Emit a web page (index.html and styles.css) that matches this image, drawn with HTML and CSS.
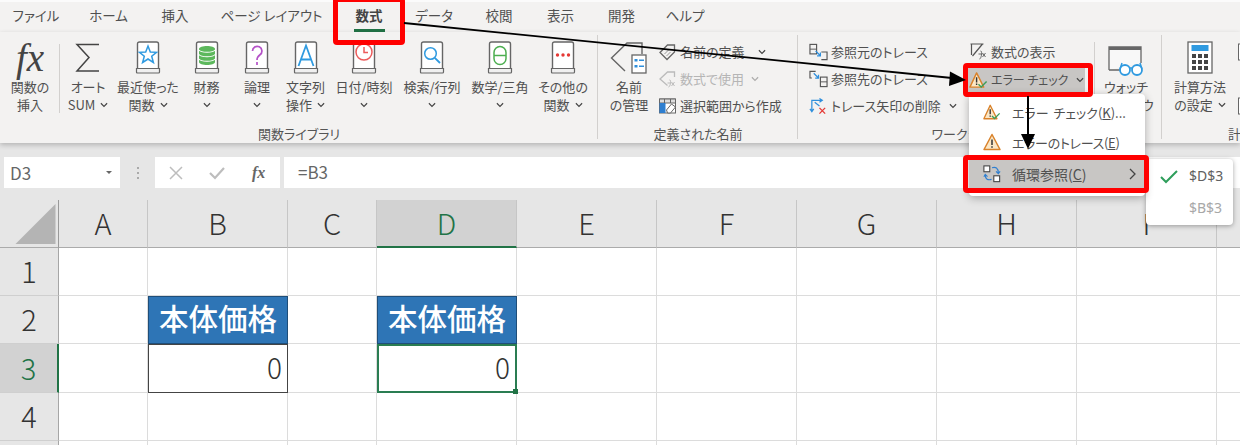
FILE: index.html
```html
<!DOCTYPE html>
<html lang="ja">
<head>
<meta charset="utf-8">
<title>数式 エラーチェック</title>
<link rel="stylesheet" href="styles.css">
</head>
<body>
<svg class="defs" width="0" height="0" aria-hidden="true">
  <symbol id="book" viewBox="0 0 26 33"><path d="M2.500 28V3q0-2 2-2h17q2 0 2 2v25" fill="#fff" stroke="#666" stroke-width="1.400"/><path d="M1.500 27.500h23V31q0 1-1 1H2.500q-1 0-1-1z" fill="#f0f0f0" stroke="#666" stroke-width="1.200"/></symbol>
  <symbol id="chev" viewBox="0 0 9 6"><path d="M1 1l3.500 3.500L8 1" fill="none" stroke="#444" stroke-width="1.300"/></symbol>
  <symbol id="warn" viewBox="0 0 18 18"><path d="M9 1.500L17 16.500H1z" fill="#fbe7c6" stroke="#d9822b" stroke-width="1.500" stroke-linejoin="round"/><path d="M9 6.500v5.500M9 13.300v1.500" stroke="#333" stroke-width="1.500"/></symbol>
  <symbol id="warncheck" viewBox="0 0 20 18"><path d="M8 1.500L15.500 16.500H1z" fill="#fbe7c6" stroke="#d9822b" stroke-width="1.500" stroke-linejoin="round"/><path d="M8 6v5.500M8 12.800v1.500" stroke="#333" stroke-width="1.500"/><path d="M10 13.500l2.800 2.800 5.700-5.800" fill="none" stroke="#3c9e5a" stroke-width="1.500"/></symbol>
</svg>
<div class="page">
  <nav class="tabs">
    <span class="tab">ファイル</span><span class="tab">ホーム</span><span class="tab">挿入</span><span class="tab">ページ レイアウト</span><span class="tab tab-active">数式</span><span class="tab">データ</span><span class="tab">校閲</span><span class="tab">表示</span><span class="tab">開発</span><span class="tab">ヘルプ</span>
  </nav>

  <section class="ribbon">
    <div class="group group-lib">
      <div class="group-body lib-grid">
        <div class="big big-sep"><span class="fx-big">fx</span><span class="lbl">関数の</span><span class="lbl">挿入</span></div>
        <div class="big"><svg class="bigicon" viewBox="0 0 26 33"><path d="M24 3.500H2l12 13L2 30h22" fill="none" stroke="#444" stroke-width="1.500"/></svg><span class="lbl">オート</span><span class="lbl">SUM <svg class="chev"><use href="#chev"/></svg></span></div>
        <div class="big"><svg class="bigicon" viewBox="0 0 26 33"><use href="#book"/><path d="M13 5l2.300 6 6.200.3-4.800 3.900 1.700 6.300-5.400-3.500-5.400 3.500 1.700-6.300-4.800-3.900 6.200-.3z" fill="none" stroke="#2f9ae0" stroke-width="1.500"/></svg><span class="lbl">最近使った</span><span class="lbl">関数 <svg class="chev"><use href="#chev"/></svg></span></div>
        <div class="big"><svg class="bigicon" viewBox="0 0 26 33"><use href="#book"/><path d="M5 8c0-4 16-4 16 0v13c0 4-16 4-16 0z" fill="#5cb85c"/><path d="M5 9c2 3 14 3 16 0M5 13.500c2 3 14 3 16 0M5 18c2 3 14 3 16 0" fill="none" stroke="#fff" stroke-width="1.100"/></svg><span class="lbl">財務</span><span class="lbl"><svg class="chev"><use href="#chev"/></svg></span></div>
        <div class="big"><svg class="bigicon" viewBox="0 0 26 33"><use href="#book"/><path d="M8.500 10a4.700 4.700 0 1 1 7.500 3.800c-2 1.500-3 2.500-3 5.200M13 21v3" fill="none" stroke="#b552c8" stroke-width="1.700"/></svg><span class="lbl">論理</span><span class="lbl"><svg class="chev"><use href="#chev"/></svg></span></div>
        <div class="big"><svg class="bigicon" viewBox="0 0 26 33"><use href="#book"/><path d="M5.500 25L13 4.500 20.500 25M8 18.500h10" fill="none" stroke="#2f9ae0" stroke-width="1.800"/></svg><span class="lbl">文字列</span><span class="lbl">操作 <svg class="chev"><use href="#chev"/></svg></span></div>
        <div class="big"><svg class="bigicon" viewBox="0 0 26 33"><use href="#book"/><circle cx="13" cy="11" r="8" fill="#fff" stroke="#ec5b5b" stroke-width="1.500"/><path d="M13 6v5.500h4" fill="none" stroke="#ec5b5b" stroke-width="1.500"/></svg><span class="lbl">日付/時刻</span><span class="lbl"><svg class="chev"><use href="#chev"/></svg></span></div>
        <div class="big"><svg class="bigicon" viewBox="0 0 26 33"><use href="#book"/><circle cx="11.500" cy="12.500" r="5.800" fill="none" stroke="#2f9ae0" stroke-width="1.500"/><path d="M15.800 16.800L21 22" stroke="#2f9ae0" stroke-width="1.800"/></svg><span class="lbl">検索/行列</span><span class="lbl"><svg class="chev"><use href="#chev"/></svg></span></div>
        <div class="big"><svg class="bigicon" viewBox="0 0 26 33"><use href="#book"/><rect x="7" y="5.500" width="12" height="18" rx="6" fill="none" stroke="#4cae50" stroke-width="1.500"/><path d="M7 14.500h12" stroke="#4cae50" stroke-width="1.500"/></svg><span class="lbl">数学/三角</span><span class="lbl"><svg class="chev"><use href="#chev"/></svg></span></div>
        <div class="big"><svg class="bigicon" viewBox="0 0 26 33"><use href="#book"/><circle cx="7.500" cy="14" r="1.700" fill="#e53935"/><circle cx="13" cy="14" r="1.700" fill="#e53935"/><circle cx="18.500" cy="14" r="1.700" fill="#e53935"/></svg><span class="lbl">その他の</span><span class="lbl">関数 <svg class="chev"><use href="#chev"/></svg></span></div>
      </div>
      <div class="group-label">関数ライブラリ</div>
    </div>

    <div class="group group-name">
      <div class="group-body">
        <div class="big big-name"><svg class="bigicon nameicon" viewBox="0 0 38 33"><path d="M15 30L1.500 17 17 2h15v11" fill="none" stroke="#666" stroke-width="1.400"/><rect x="22" y="14" width="14" height="18" fill="#fff" stroke="#666" stroke-width="1.300"/><path d="M24.500 18h3v2.500h-3zM24.500 24h3v2.500h-3z" fill="#2f8fdc"/><path d="M29 19.200h5M29 25.200h5" stroke="#2f8fdc" stroke-width="1.400"/></svg><span class="lbl">名前</span><span class="lbl">の管理</span></div>
        <div class="stack">
          <div class="small"><svg class="sicon" viewBox="0 0 18 18"><path d="M1.500 9.500L9 2h7v7l-7.500 7.500z" fill="none" stroke="#666" stroke-width="1.300"/><path d="M6 11l5-5M8 13l4-4" stroke="#999" stroke-width="1"/></svg><span>名前の定義</span><svg class="chev chev-far"><use href="#chev"/></svg></div>
          <div class="small small-off"><svg class="sicon" viewBox="0 0 18 18"><path d="M9 15.500L1.500 9 9 2h7v5" fill="none" stroke="#bbb" stroke-width="1.300"/><path d="M11 10c2-1 1 7-1 7M9 13h4M13 12l3 4M16 12l-3 4" fill="none" stroke="#bbb" stroke-width="1"/></svg><span>数式で使用</span><svg class="chev chev-off"><use href="#chev"/></svg></div>
          <div class="small"><svg class="sicon" viewBox="0 0 18 18"><rect x="1" y="2" width="16" height="14" fill="#fff" stroke="#666"/><path d="M1 2h16v4H1z" fill="#ddd" stroke="#666"/><path d="M1 6h6v10H1z" fill="#2f7fd0"/><path d="M6 2v4M12 2v4" stroke="#666"/><path d="M8 13l5-6 4 3-5 6h-3z" fill="#fff" stroke="#666"/></svg><span>選択範囲から作成</span></div>
        </div>
      </div>
      <div class="group-label">定義された名前</div>
    </div>

    <div class="group group-audit">
      <div class="group-body">
        <div class="stack stack-trace">
          <div class="small"><svg class="sicon" viewBox="0 0 20 18"><rect x="1" y="1" width="7" height="10" fill="none" stroke="#555" stroke-width="1.200"/><path d="M1 6h7" stroke="#555"/><path d="M13 9h6v8h-6" fill="none" stroke="#555" stroke-width="1.200"/><path d="M7 8l5 5M12 9.500V13H8.500" fill="none" stroke="#2f8fdc" stroke-width="1.300"/></svg><span>参照元のトレース</span></div>
          <div class="small"><svg class="sicon" viewBox="0 0 20 18"><path d="M7 1H1v7h2" fill="none" stroke="#555" stroke-width="1.200"/><rect x="12" y="7" width="7" height="10" fill="none" stroke="#555" stroke-width="1.200"/><path d="M12 12h7" stroke="#555"/><path d="M5 3l5 5M10 4.500V8H6.500" fill="none" stroke="#2f8fdc" stroke-width="1.300"/></svg><span>参照先のトレース</span></div>
          <div class="small"><svg class="sicon" viewBox="0 0 20 18"><path d="M3 14V3h10M1 12l2 3 2-3M11 1l3 2-3 2M6 5l5 4" fill="none" stroke="#2f8fdc" stroke-width="1.300"/><path d="M11 11l6 6M17 11l-6 6" stroke="#e53935" stroke-width="1.400"/></svg><span>トレース矢印の削除</span><svg class="chev chev-trace"><use href="#chev"/></svg></div>
        </div>
        <div class="stack stack-check">
          <div class="small"><svg class="sicon" viewBox="0 0 18 18"><path d="M1 1h13M2 1v11M13 1L3 13" fill="none" stroke="#555" stroke-width="1.200"/><path d="M11 8c2-1 1 8-1 8M9 11h4M13 10l3 4M16 10l-3 4" fill="none" stroke="#666"/></svg><span>数式の表示</span></div>
          <div class="small small-on"><svg class="sicon" viewBox="0 0 20 18"><use href="#warncheck"/></svg><span class="err-text">エラー チェック</span><svg class="chev chev-err"><use href="#chev"/></svg></div>
        </div>
        <div class="big big-watch"><svg class="watchicon" viewBox="0 0 36 33"><path d="M1 25V2h32v16M1 25h12" fill="#f8f8f8" stroke="#666" stroke-width="1.300"/><path d="M1 2h32v3H1z" fill="#666"/><circle cx="17" cy="25" r="5" fill="#fff" stroke="#2f9ae0" stroke-width="1.800"/><circle cx="29" cy="25" r="5" fill="#fff" stroke="#2f9ae0" stroke-width="1.800"/><path d="M21.500 23h3M12 24l2-6M34 24l-2-6" fill="none" stroke="#2f9ae0" stroke-width="1.500"/></svg><span class="lbl">ウォッチ</span><span class="lbl">ウィンドウ</span></div>
      </div>
      <div class="group-label">ワークシート分析</div>
    </div>

    <div class="group group-calc">
      <div class="group-body">
        <div class="big big-calc"><svg class="bigicon" viewBox="0 0 26 33"><rect x="1" y="1" width="24" height="31" fill="#fff" stroke="#666" stroke-width="1.300"/><rect x="4.500" y="4" width="17" height="6" fill="#2f9ae0"/><g fill="#444"><rect x="5" y="13" width="4" height="4"/><rect x="11" y="13" width="4" height="4"/><rect x="17" y="13" width="4" height="4"/><rect x="5" y="19" width="4" height="4"/><rect x="11" y="19" width="4" height="4"/><rect x="17" y="19" width="4" height="4"/><rect x="5" y="25" width="4" height="4"/><rect x="11" y="25" width="4" height="4"/><rect x="17" y="25" width="4" height="4"/></g></svg><span class="lbl">計算方法</span><span class="lbl">の設定 <svg class="chev"><use href="#chev"/></svg></span></div>
        <div class="stack stack-calc">
          <div class="small"><svg class="sicon" viewBox="0 0 18 18"><rect x="1" y="1" width="16" height="16" fill="#fff" stroke="#666"/><path d="M3 5h12M3 9h12M3 13h12" stroke="#666"/></svg></div>
          <div class="small"></div>
          <div class="small"><svg class="sicon" viewBox="0 0 18 18"><rect x="1" y="1" width="16" height="16" fill="#fff" stroke="#666"/><path d="M3 5h12M3 9h12M3 13h12" stroke="#666"/></svg></div>
        </div>
      </div>
      <div class="group-label calc-label">計算</div>
    </div>
  </section>

  <section class="fbar">
    <div class="namebox"><span>D3</span><i class="drop"></i></div>
    <div class="grip"><b></b><b></b><b></b></div>
    <div class="fbtns">
      <svg class="fb-x" viewBox="0 0 14 14"><path d="M1 1l12 12M13 1L1 13" stroke="#bdbdbd" stroke-width="1.500"/></svg>
      <svg class="fb-c" viewBox="0 0 16 14"><path d="M1 7l5 5 9-10" fill="none" stroke="#bdbdbd" stroke-width="2.200"/></svg>
      <span class="fb-fx">fx</span>
    </div>
    <div class="finput">=B3</div>
  </section>

  <section class="sheet">
    <div class="c hd corner"><svg class="tri" viewBox="0 0 41 41"><path d="M41 0v41H0z" fill="#b4b4b4"/></svg></div>
    <div class="c hd">A</div><div class="c hd">B</div><div class="c hd">C</div><div class="c hd hd-on">D</div><div class="c hd">E</div><div class="c hd">F</div><div class="c hd">G</div><div class="c hd">H</div><div class="c hd">I</div><div class="c hd">J</div>

    <div class="c rh">1</div><div class="c"></div><div class="c"></div><div class="c"></div><div class="c"></div><div class="c"></div><div class="c"></div><div class="c"></div><div class="c"></div><div class="c"></div><div class="c"></div>

    <div class="c rh">2</div><div class="c"></div><div class="c blue">本体価格</div><div class="c"></div><div class="c blue">本体価格</div><div class="c"></div><div class="c"></div><div class="c"></div><div class="c"></div><div class="c"></div><div class="c"></div>

    <div class="c rh rh-on">3</div><div class="c"></div><div class="c val boxed">0</div><div class="c"></div><div class="c val selected">0</div><div class="c"></div><div class="c"></div><div class="c"></div><div class="c"></div><div class="c"></div><div class="c"></div>

    <div class="c rh">4</div><div class="c"></div><div class="c"></div><div class="c"></div><div class="c"></div><div class="c"></div><div class="c"></div><div class="c"></div><div class="c"></div><div class="c"></div><div class="c"></div>

    <div class="c rh"></div><div class="c"></div><div class="c"></div><div class="c"></div><div class="c"></div><div class="c"></div><div class="c"></div><div class="c"></div><div class="c"></div><div class="c"></div><div class="c"></div>
  </section>

  <div class="menu">
    <div class="mi"><svg class="micon" viewBox="0 0 20 18"><use href="#warncheck"/></svg><span class="mi-first">エラー チェック(<u>K</u>)...</span></div>
    <div class="mi"><svg class="micon" viewBox="0 0 18 18"><use href="#warn"/></svg><span class="mi-tight">エラーのトレース(<u>E</u>)</span></div>
    <div class="mi mi-on"><svg class="micon" viewBox="0 0 20 20"><rect x="1" y="1" width="6.500" height="6.500" fill="#fff" stroke="#444" stroke-width="1.200"/><rect x="12" y="12" width="6.500" height="6.500" fill="#fff" stroke="#444" stroke-width="1.200"/><path d="M10 3c4-1 7 0 7 6M14.500 7l2.500 2.500L19 7M9.500 16c-4 1-7 0-7-5M1 13l1.500-2.500L5 13" fill="none" stroke="#2f7fd0" stroke-width="1.300"/></svg><span class="mi-wide">循環参照(<u>C</u>)</span><svg class="mi-arrow" viewBox="0 0 7 12"><path d="M1 1l5 5-5 5" fill="none" stroke="#444" stroke-width="1.300"/></svg></div>
  </div>
  <div class="submenu">
    <div class="si"><svg class="si-check" viewBox="0 0 18 14"><path d="M1 7l5 5L17 1" fill="none" stroke="#2e9e5b" stroke-width="2"/></svg><span>$D$3</span></div>
    <div class="si si-off"><span>$B$3</span></div>
  </div>

  <div class="red red-tab"></div>
  <div class="red red-err"></div>
  <div class="red red-circ"></div>

  <svg class="arrows" viewBox="0 0 1240 445" aria-hidden="true">
    <path d="M404 23L952 78" stroke="#000" stroke-width="1.800"/>
    <path d="M966 80L950 71.500 949 86z" fill="#000"/>
    <path d="M1028 96V136" stroke="#000" stroke-width="2"/>
    <path d="M1028 149L1021 134H1035z" fill="#000"/>
  </svg>
</div>
</body>
</html>
```

FILE: styles.css
```css
* { box-sizing: border-box; }
html, body { margin: 0; padding: 0; }
body { width: 1240px; height: 445px; overflow: hidden; background: #e6e6e6; font-family: "Noto Sans CJK JP", "Noto Sans", sans-serif; color: #505050; }
.defs { position: absolute; }
.page { position: relative; width: 1240px; height: 445px; overflow: hidden; display: flex; flex-direction: column; }

/* tabs */
.tabs { height: 32px; flex: none; padding-top: 1px; background: #f3f2f1; border-top: 2px solid #fbfbfb; display: grid; grid-template-columns: 72px 73px 60px 133px 62px 68px 62px 61px 61px 66px; font-size: 13.500px; font-feature-settings: "palt"; color: #505050; }
.tab { position: relative; text-align: center; line-height: 24px; }
.tab-active { font-weight: 700; color: #444; }
.tab-active::after { content: ""; position: absolute; left: 16px; right: 15px; top: 26px; height: 3px; background: #217346; }

/* ribbon */
.ribbon { position: relative; z-index: 2; height: 111px; flex: none; background: #f3f2f1; box-shadow: 0 2px 5px rgba(0, 0, 0, .22); display: flex; font-feature-settings: "palt"; font-size: 13px; }
.group { display: flex; flex-direction: column; flex: none; position: relative; }
.group::after { content: ""; position: absolute; right: 0; top: 3px; bottom: 4px; width: 1px; background: #d2d0ce; }
.group-lib { width: 598px; }
.group-name { width: 200px; }
.group-audit { width: 364px; }
.group-calc { width: 90px; }
.group-calc::after { display: none; }
.group-body { height: 93px; padding-top: 6px; display: flex; }
.lib-grid { display: grid; grid-template-columns: 60px 56px 64px 53px 48px 49px 68px 68px 68px 58px; }
.group-label { text-align: center; line-height: 18px; font-size: 13px; color: #555; }
.calc-label { text-align: left; padding-left: 66px; white-space: nowrap; }

.big { display: flex; flex-direction: column; align-items: center; position: relative; flex: none; }
.big-sep::after { content: ""; position: absolute; right: 0; top: 6px; height: 69px; width: 1px; background: #d2d0ce; }
.bigicon { width: 26px; height: 33px; margin-top: 3px; margin-bottom: 4px; flex: none; }
.lbl { line-height: 18px; height: 18px; white-space: nowrap; display: flex; align-items: center; gap: 5px; }
.chev { width: 8px; height: 6px; flex: none; }
.fx-big { font-family: "Liberation Serif", serif; font-style: italic; font-size: 39px; line-height: 33px; height: 33px; margin-top: 3px; margin-bottom: 4px; color: #444; }

.big-name { width: 58px; margin-left: 2px; }
.nameicon { width: 38px; }
.stack { display: flex; flex-direction: column; flex: none; }
.small { height: 27px; display: flex; align-items: center; gap: 3px; white-space: nowrap; flex: none; }
.sicon { width: 19px; height: 18px; flex: none; }
.small-off { color: #b5b5b5; }
.chev-off { opacity: .4; margin-left: 4px; }
.chev-far { margin-left: 10px; }

.stack-trace { width: 162px; padding-left: 11px; }
.chev-trace { margin-left: 5px; }
.stack-check { width: 130px; padding-left: 6px; }
.stack-check .small { width: 119px; padding-left: 3px; }
.small-on { background: #c8c6c4; margin-top: 2px; height: 25px; }
.err-text { font-size: 12px; }
.chev-err { margin-left: 5px; }
.group-audit .group-body { position: relative; }
.stack-check::after { content: ""; position: absolute; left: 296px; top: 10px; height: 74px; width: 1px; background: #d2d0ce; }
.big-watch { width: 62px; margin-left: 5px; }
.watchicon { width: 36px; height: 33px; margin-top: 7px; margin-bottom: 0; }

.big-calc { width: 70px; margin-left: 3px; margin-right: 2px; }
.stack-calc { padding-left: 0; }

/* formula bar */
.fbar { height: 57px; flex: none; padding: 14px 0 12px 4px; display: flex; background: #e6e6e6; }
.namebox { width: 116px; background: #fff; display: flex; align-items: center; justify-content: space-between; padding: 0 8px 0 6px; font-size: 17px; color: #666; }
.drop { width: 0; height: 0; border: 3px solid transparent; border-top: 3px solid #666; border-bottom: 0; }
.grip { width: 35px; display: flex; flex-direction: column; align-items: center; justify-content: center; gap: 3px; }
.grip b { width: 2px; height: 2px; background: #aaa; }
.fbtns { width: 125px; background: #fff; display: flex; align-items: center; padding-left: 14px; gap: 26px; }
.fb-x { width: 14px; height: 14px; }
.fb-c { width: 16px; height: 14px; }
.fb-fx { font-family: "Liberation Serif", serif; font-style: italic; font-weight: 700; font-size: 16px; color: #666; margin-left: 1px; }
.finput { flex: 1; background: #fff; margin-left: 4px; padding-left: 14px; font-size: 17px; line-height: 30px; color: #666; }

/* sheet */
.sheet { flex: none; background: #fff; display: grid; grid-template-columns: 59px 89px 140px 89px 140px 140px 140px 140px 140px 140px 140px; grid-template-rows: 48px 48px 48px 49px 48px 48px; color: #333; }
.c { border-right: 1px solid #dcdcdc; border-bottom: 1px solid #dcdcdc; display: flex; align-items: center; justify-content: center; font-size: 29px; font-weight: 300; padding-bottom: 3px; }
.hd { background: #e6e6e6; border-right-color: #c6c6c6; border-bottom: 1px solid #ababab; }
.corner { position: relative; border-right-color: #9a9a9a; }
.tri { position: absolute; left: 15px; top: 4px; width: 41px; height: 40px; }
.hd-on { background: #d2d2d2; color: #217346; border-bottom: 2px solid #217346; }
.rh { background: #e6e6e6; border-right-color: #a6a6a6; border-bottom-color: #cfcfcf; }
.rh-on { background: #d2d2d2; color: #217346; border-right: 2px solid #217346; }
.blue { background: #2e75b6; color: #fff; font-size: 29.500px; font-weight: 500; border: 1px solid #1f4e79; padding-bottom: 6px; }
.val { justify-content: flex-end; padding-right: 5px; font-size: 28px; }
.boxed { border: 1px solid #444; }
.selected { position: relative; border: 2px solid #2a7d52; }
.selected::after { content: ""; position: absolute; right: -3px; bottom: -3px; width: 5px; height: 5px; background: #217346; }

/* drop-down menus over the sheet */
.menu { position: absolute; z-index: 5; left: 969px; top: 94px; width: 176px; height: 102px; padding-top: 3px; background: #fff; border-radius: 4px; box-shadow: 0 2px 8px rgba(0, 0, 0, .3); font-size: 13px; font-feature-settings: "palt"; }
.mi { height: 30px; display: flex; align-items: center; padding-left: 14px; gap: 11px; position: relative; white-space: nowrap; }
.micon { width: 18px; height: 18px; flex: none; }
.mi-first { word-spacing: 2px; }
.mi-tight { letter-spacing: -.3px; }
.mi-wide { font-size: 14px; }
.mi-on { background: #c8c6c4; height: 30px; margin-top: 2px; }
.mi-arrow { position: absolute; right: 9px; top: 9px; width: 7px; height: 12px; }
.submenu { position: absolute; z-index: 4; left: 1146px; top: 159px; width: 87px; height: 66px; background: #fff; border-radius: 4px; box-shadow: 0 1px 5px rgba(0, 0, 0, .35); font-family: "Noto Sans", sans-serif; font-size: 14px; }
.si { height: 32px; position: relative; display: flex; align-items: center; padding-left: 43px; color: #606060; }
.si-off { color: #a8a8a8; }
.si-check { position: absolute; left: 14px; top: 11px; width: 18px; height: 14px; }

.red { position: absolute; z-index: 6; border: 5px solid #f00; border-radius: 4px; pointer-events: none; }
.red-tab { left: 333px; top: -3px; width: 72px; height: 48px; }
.red-err { left: 963px; top: 63px; width: 130px; height: 34px; }
.red-circ { left: 963px; top: 155px; width: 186px; height: 38px; }
.arrows { position: absolute; z-index: 7; left: 0; top: 0; width: 1240px; height: 445px; pointer-events: none; }
```
